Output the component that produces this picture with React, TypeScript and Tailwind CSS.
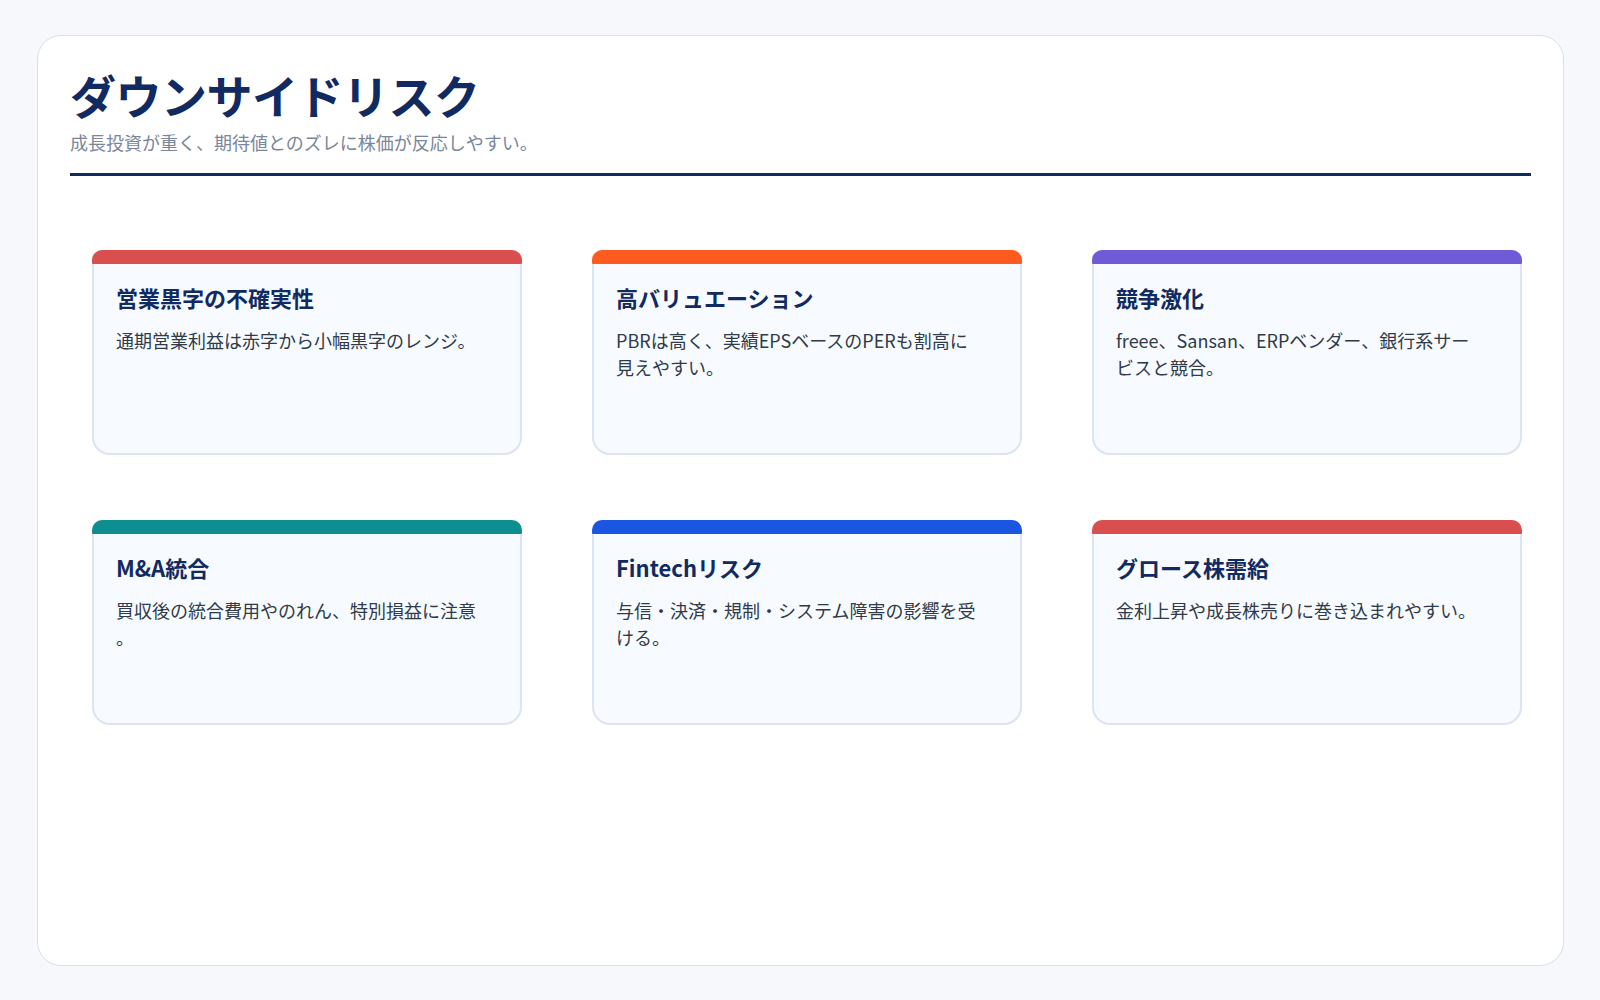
const cards = [
  { c: "bg-[#d94f4f]", t: "営業黒字の不確実性", d: "通期営業利益は赤字から小幅黒字のレンジ。" },
  { c: "bg-[#ff5a1f]", t: "高バリュエーション", d: "PBRは高く、実績EPSベースのPERも割高に見えやすい。" },
  { c: "bg-[#715ad6]", t: "競争激化", d: "freee、Sansan、ERPベンダー、銀行系サービスと競合。" },
  { c: "bg-[#0d8f92]", t: "M&A統合", d: "買収後の統合費用やのれん、特別損益に注意。" },
  { c: "bg-[#1a56e0]", t: "Fintechリスク", d: "与信・決済・規制・システム障害の影響を受ける。" },
  { c: "bg-[#d94f4f]", t: "グロース株需給", d: "金利上昇や成長株売りに巻き込まれやすい。" },
];

export default function App() {
  return (
    <div className="w-[1600px] h-[1000px] bg-[#f6f8fc] pt-[35px] pl-[37px]" style={{ fontFamily: '"Noto Sans CJK JP", "Noto Sans", sans-serif' }}>
      <div className="w-[1527px] h-[931px] bg-white border border-[#d6e0ef] rounded-[24px] px-[32px] pt-[26px]">
        <h1 className="text-[46px] font-bold text-[#112a61] leading-[64px] tracking-[-0.5px]">ダウンサイドリスク</h1>
        <p className="text-[18px] text-[#7a8699] leading-[28px] mt-[2px]">成長投資が重く、期待値とのズレに株価が反応しやすい。</p>
        <div className="h-[3px] bg-[#112a61] mt-[17px]" />
        <div className="grid grid-cols-[430px_430px_430px] gap-x-[70px] gap-y-[65px] pl-[22px] mt-[74px]">
          {cards.map((k, i) => (
            <div key={i} className="h-[205px] flex flex-col">
              <div className={`h-[16px] rounded-t-[10px] rounded-b-[4px] ${k.c}`} />
              <div className="flex-1 -mt-[2px] bg-[#f7faff] border-x-2 border-b-2 border-[#dbe4f1] rounded-b-[18px] pl-[22px] pr-[38px] pt-[17px]">
                <div className="text-[22px] font-bold text-[#112a61] leading-[32px]">{k.t}</div>
                <div className="mt-[14px] text-[18px] text-[#2f3a4a] leading-[27px] [line-break:anywhere]">{k.d}</div>
              </div>
            </div>
          ))}
        </div>
      </div>
    </div>
  );
}
